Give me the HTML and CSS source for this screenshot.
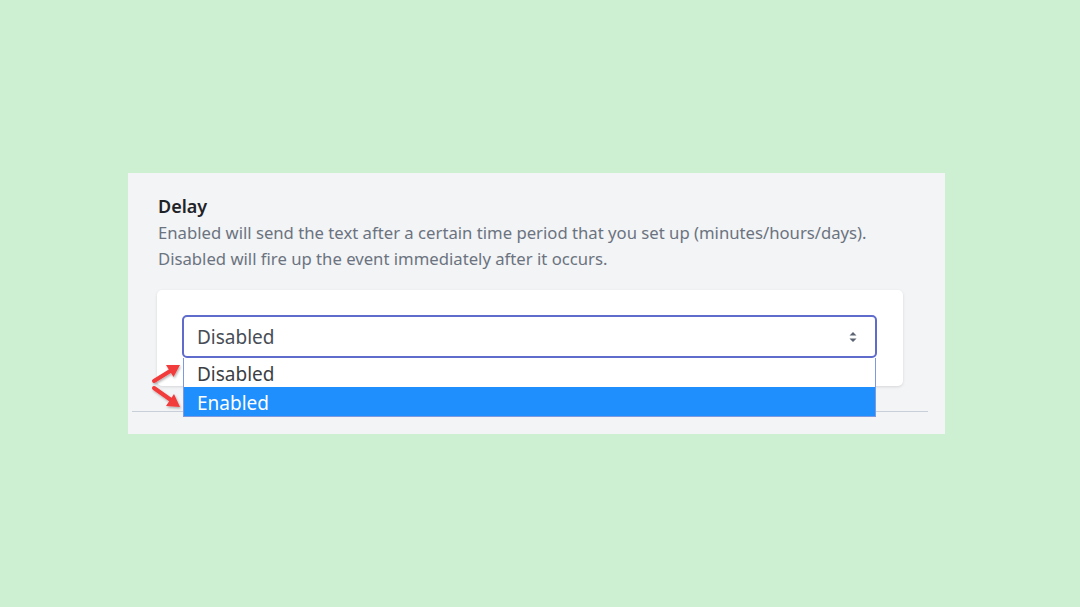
FILE: index.html
```html
<!DOCTYPE html>
<html lang="en">
<head>
    <meta charset="UTF-8">
    <title>Delay</title>
    <link rel="stylesheet" href="styles.css">
</head>
<body>
    <div class="panel">
        <h3 class="field-title">Delay</h3>
        <p class="field-help">Enabled will send the text after a certain time period that you set up (minutes/hours/days).<br>Disabled will fire up the event immediately after it occurs.</p>

        <div class="card">
            <div class="select-wrap">
                <div class="select">
                    <span>Disabled</span>
                    <svg class="select-caret" width="10" height="14" viewBox="0 0 10 14">
                        <path d="M1.5 5.5 L5 2 L8.5 5.5 Z M1.5 8.5 L5 12 L8.5 8.5 Z" fill="#5b6472"/>
                    </svg>
                </div>
                <ul class="options">
                    <li class="option">Disabled</li>
                    <li class="option active">Enabled</li>
                </ul>
                <svg class="pointers" width="40" height="60" viewBox="0 0 40 60">
                    <defs>
                        <filter id="shade" x="-30%" y="-30%" width="160%" height="160%">
                            <feDropShadow dx="1" dy="1.5" stdDeviation="1" flood-color="#000" flood-opacity="0.3"/>
                        </filter>
                    </defs>
                    <g filter="url(#shade)" fill="#f23a3a" stroke="#f23a3a" stroke-width="4" stroke-linecap="round">
                        <line x1="4" y1="26" x2="21" y2="15.5"/>
                        <path d="M30 10 L23.5 22 L16 10 Z" stroke="none"/>
                        <line x1="4" y1="33" x2="21" y2="45"/>
                        <path d="M30 52 L16 51 L24 39 Z" stroke="none"/>
                    </g>
                </svg>
            </div>
        </div>

        <div class="divider"></div>
    </div>
</body>
</html>
```

FILE: styles.css
```css
* {
    box-sizing: border-box;
    margin: 0;
    padding: 0;
}

body {
    background: #cdf0d3;
    font-family: 'Noto Sans', 'Open Sans', sans-serif;
    min-height: 100vh;
    display: flex;
    align-items: center;
    justify-content: center;
}

.panel {
    width: 817px;
    height: 261px;
    background: #f3f4f6;
    padding: 20px 42px 0 30px;
    position: relative;
    margin-left: -7px;
    margin-top: -1px;
}

.field-title {
    font-size: 18px;
    font-weight: 600;
    color: #1f2328;
    line-height: 26px;
}

.field-help {
    font-size: 16.7px;
    color: #6b7380;
    line-height: 26px;
    margin-top: 1px;
}

.card {
    background: #fff;
    border-radius: 5px;
    box-shadow: 0 1px 3px rgba(0,0,0,0.12);
    padding: 25px 26px 28px 25px;
    margin-top: 18px;
    margin-left: -1px;
}

.select-wrap {
    position: relative;
}

.select {
    height: 43px;
    border: 2px solid #5f6ccb;
    border-radius: 5px;
    display: flex;
    align-items: center;
    justify-content: space-between;
    padding: 2px 17px 0 13px;
    font-size: 19px;
    color: #474d56;
}

.options {
    list-style: none;
    position: absolute;
    top: 43px;
    left: 1px;
    right: 1px;
    background: #fff;
    border: 1px solid #7d9ae0;
    border-top: none;
    z-index: 2;
}

.option {
    height: 29px;
    line-height: 26px;
    padding: 3px 0 0 13px;
    font-size: 19px;
    color: #3c3f44;
}

.option.active {
    background: #1e8ffd;
    color: #fff;
}

.pointers {
    position: absolute;
    left: -32px;
    top: 40px;
    z-index: 3;
}

.divider {
    position: absolute;
    left: 4px;
    right: 17px;
    bottom: 22px;
    height: 1px;
    background: #c9cfd8;
}
```
